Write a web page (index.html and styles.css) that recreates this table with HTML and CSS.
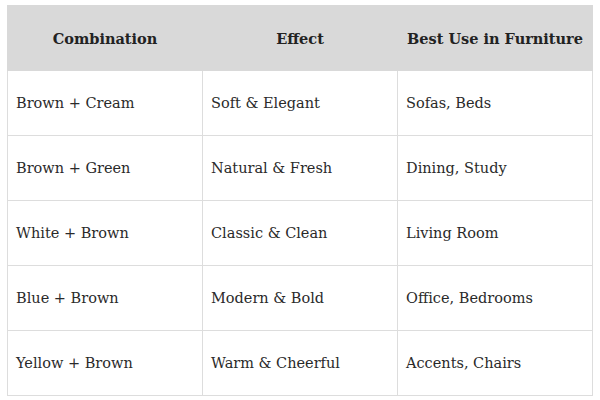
FILE: index.html
```html
<!DOCTYPE html>
<html>
<head>
<meta charset="utf-8">
<link rel="stylesheet" href="styles.css">
</head>
<body>
<table class="combo">
  <thead>
    <tr><th>Combination</th><th>Effect</th><th>Best Use in Furniture</th></tr>
  </thead>
  <tbody>
    <tr><td>Brown + Cream</td><td>Soft &amp; Elegant</td><td>Sofas, Beds</td></tr>
    <tr><td>Brown + Green</td><td>Natural &amp; Fresh</td><td>Dining, Study</td></tr>
    <tr><td>White + Brown</td><td>Classic &amp; Clean</td><td>Living Room</td></tr>
    <tr><td>Blue + Brown</td><td>Modern &amp; Bold</td><td>Office, Bedrooms</td></tr>
    <tr><td>Yellow + Brown</td><td>Warm &amp; Cheerful</td><td>Accents, Chairs</td></tr>
  </tbody>
</table>
</body>
</html>
```
FILE: styles.css
```css
html, body {
  margin: 0;
  padding: 0;
  background: #ffffff;
}
body {
  padding: 5px 0 0 7px;
  font-family: "DejaVu Serif", "Liberation Serif", serif;
  color: #2a2a2a;
}
.combo {
  border-collapse: collapse;
  width: 586px;
  table-layout: fixed;
}
.combo th, .combo td {
  border: 1px solid #dddddd;
  height: 65px;
  padding: 0 8px;
  box-sizing: border-box;
}
.combo th {
  background: #d9d9d9;
  border-color: #d9d9d9;
  font-weight: bold;
  font-size: 14.5px;
  text-align: center;
  color: #222;
}
.combo td {
  font-size: 14.5px;
  text-align: left;
}
```
